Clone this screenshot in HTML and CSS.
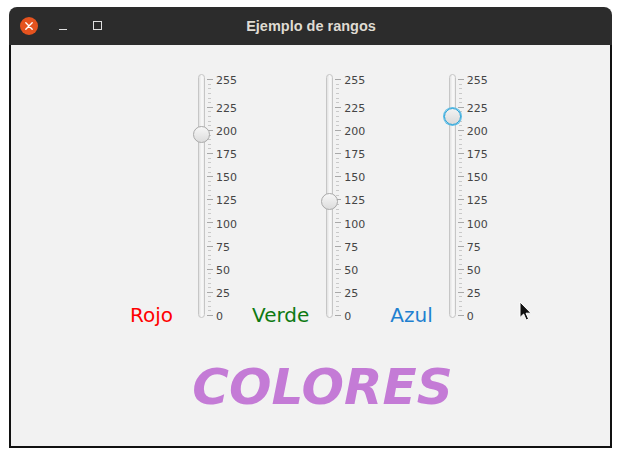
FILE: index.html
```html
<!DOCTYPE html>
<html lang="es">
<head>
<meta charset="utf-8">
<title>Ejemplo de rangos</title>
<link rel="stylesheet" href="styles.css">
</head>
<body>
<div class="window">
  <div class="titlebar">
    <div class="controls">
      <span class="btn-close">
        <svg width="18" height="18" viewBox="0 0 18 18"><circle cx="9" cy="9" r="9" fill="#e5531f"/><path d="M5.8 5.8 L12.2 12.2 M12.2 5.8 L5.8 12.2" stroke="#fff" stroke-width="1.4" stroke-linecap="round"/></svg>
      </span>
      <span class="btn-min"></span>
      <span class="btn-max"></span>
    </div>
    <div class="title">Ejemplo de rangos</div>
  </div>
  <div class="content">
    <div class="row">
      <span class="name rojo">Rojo</span>
      <div class="slider s1">
        <div class="track"><span class="thumb" style="top: 51.3px"></span></div>
        <div class="scale">
          <div class="ticks"></div>
          <div class="labels">
            <span class="lbl top">255</span><span class="lbl">225</span><span class="lbl">200</span><span class="lbl">175</span><span class="lbl">150</span><span class="lbl">125</span><span class="lbl">100</span><span class="lbl">75</span><span class="lbl">50</span><span class="lbl">25</span><span class="lbl">0</span>
          </div>
        </div>
      </div>
      <span class="name verde">Verde</span>
      <div class="slider s2">
        <div class="track"><span class="thumb" style="top: 118.2px"></span></div>
        <div class="scale">
          <div class="ticks"></div>
          <div class="labels">
            <span class="lbl top">255</span><span class="lbl">225</span><span class="lbl">200</span><span class="lbl">175</span><span class="lbl">150</span><span class="lbl">125</span><span class="lbl">100</span><span class="lbl">75</span><span class="lbl">50</span><span class="lbl">25</span><span class="lbl">0</span>
          </div>
        </div>
      </div>
      <span class="name azul">Azul</span>
      <div class="slider s3">
        <div class="track"><span class="thumb focused" style="top: 32.6px"></span></div>
        <div class="scale">
          <div class="ticks"></div>
          <div class="labels">
            <span class="lbl top">255</span><span class="lbl">225</span><span class="lbl">200</span><span class="lbl">175</span><span class="lbl">150</span><span class="lbl">125</span><span class="lbl">100</span><span class="lbl">75</span><span class="lbl">50</span><span class="lbl">25</span><span class="lbl">0</span>
          </div>
        </div>
      </div>
    </div>
    <div class="colores">COLORES</div>
  </div>
</div>
<svg class="cursor" width="14" height="21" viewBox="0 0 14 21"><path d="M1 1 L1 16.5 L4.6 13 L7.2 19 L9.6 18 L7 12.2 L12 12.2 Z" fill="#111" stroke="#fff" stroke-width="1" stroke-linejoin="round"/></svg>
</body>
</html>
```
FILE: styles.css
```css
* { box-sizing: border-box; }
html, body { margin: 0; padding: 0; background: #ffffff; }
body { width: 622px; height: 457px; overflow: hidden; position: relative; font-family: "DejaVu Sans", sans-serif; }

.window {
  margin: 7px 0 0 9px;
  width: 603px;
  height: 441px;
  display: flex;
  flex-direction: column;
}

.titlebar {
  height: 38px;
  flex: none;
  background: #2c2c2c;
  border-radius: 8px 8px 0 0;
  display: flex;
  align-items: center;
  position: relative;
}
.controls { display: flex; align-items: center; padding-left: 11px; }
.btn-close { width: 18px; height: 18px; display: block; }
.btn-close svg { display: block; }
.btn-min { width: 8px; height: 1px; background: #e0e0e0; margin-left: 21px; margin-top: 7px; }
.btn-max { width: 9px; height: 9px; border: 1px solid #e0e0e0; margin-left: 26px; margin-top: -1px; }
.title {
  position: absolute;
  left: 0; right: 0; top: 0; bottom: 0;
  display: flex; align-items: center; justify-content: center;
  font-family: "Liberation Sans", Arial, sans-serif;
  font-weight: bold;
  font-size: 14.5px;
  color: #dfdbd2;
  padding-left: 1px;
}

.content {
  flex: 1;
  background: #f2f2f2;
  border: 2px solid #111;
  border-top: none;
  padding-top: 29px;
}

.row { display: flex; align-items: flex-end; height: 244px; }

.name { font-size: 20px; line-height: 20px; margin-bottom: -7px; }
.rojo { color: #ff0000; margin-left: 119px; margin-right: 25px; }
.verde { color: #0e7a12; margin-left: 10px; margin-right: 17px; }
.azul { color: #1f80d0; margin-left: 20px; margin-right: 16px; }

.slider { display: flex; height: 244px; }
.track {
  width: 7px;
  height: 244px;
  border: 1px solid #c6c6c6;
  border-radius: 4px;
  background: linear-gradient(to right, #e2e2e2, #fafafa 60%, #ececec);
  position: relative;
}
.thumb {
  position: absolute;
  left: -6px;
  width: 17px;
  height: 17px;
  border-radius: 50%;
  border: 1px solid #a9a9a9;
  background: linear-gradient(#f7f7f7, #dcdcdc);
}
.thumb.focused {
  border: 1.5px solid #1ea0d8;
  box-shadow: 0 0 0 1px #5cbde6;
  background: linear-gradient(#f2f2f2, #dadada);
}

.scale { display: flex; width: 37px; height: 244px; }
.ticks {
  width: 9px;
  height: 244px;
  flex: none;
  background:
    linear-gradient(#a8a8a8, #a8a8a8) 2px 5px / 6px 1px no-repeat,
    repeating-linear-gradient(to top, #a8a8a8 0 1px, transparent 1px 23.1373px) 2px 19px / 6px 223px no-repeat,
    repeating-linear-gradient(to top, #c9c9c9 0 1px, transparent 1px 4.6275px) 3px 5px / 3px 237px no-repeat;
}
.labels {
  display: flex;
  flex-direction: column;
  margin-top: -4.8px;
  padding-left: 2px;
}
.lbl {
  display: block;
  height: 23.1373px;
  line-height: 23.1373px;
  font-size: 11px;
  color: #454545;
  white-space: nowrap;
}
.lbl.top { margin-bottom: 4.6275px; }

.colores {
  margin-top: 44px;
  text-align: center;
  padding-left: 24px;
  font-size: 50px;
  line-height: 50px;
  font-weight: bold;
  font-style: italic;
  color: #c47bd6;
}

.cursor { position: absolute; left: 519px; top: 301px; }
```
